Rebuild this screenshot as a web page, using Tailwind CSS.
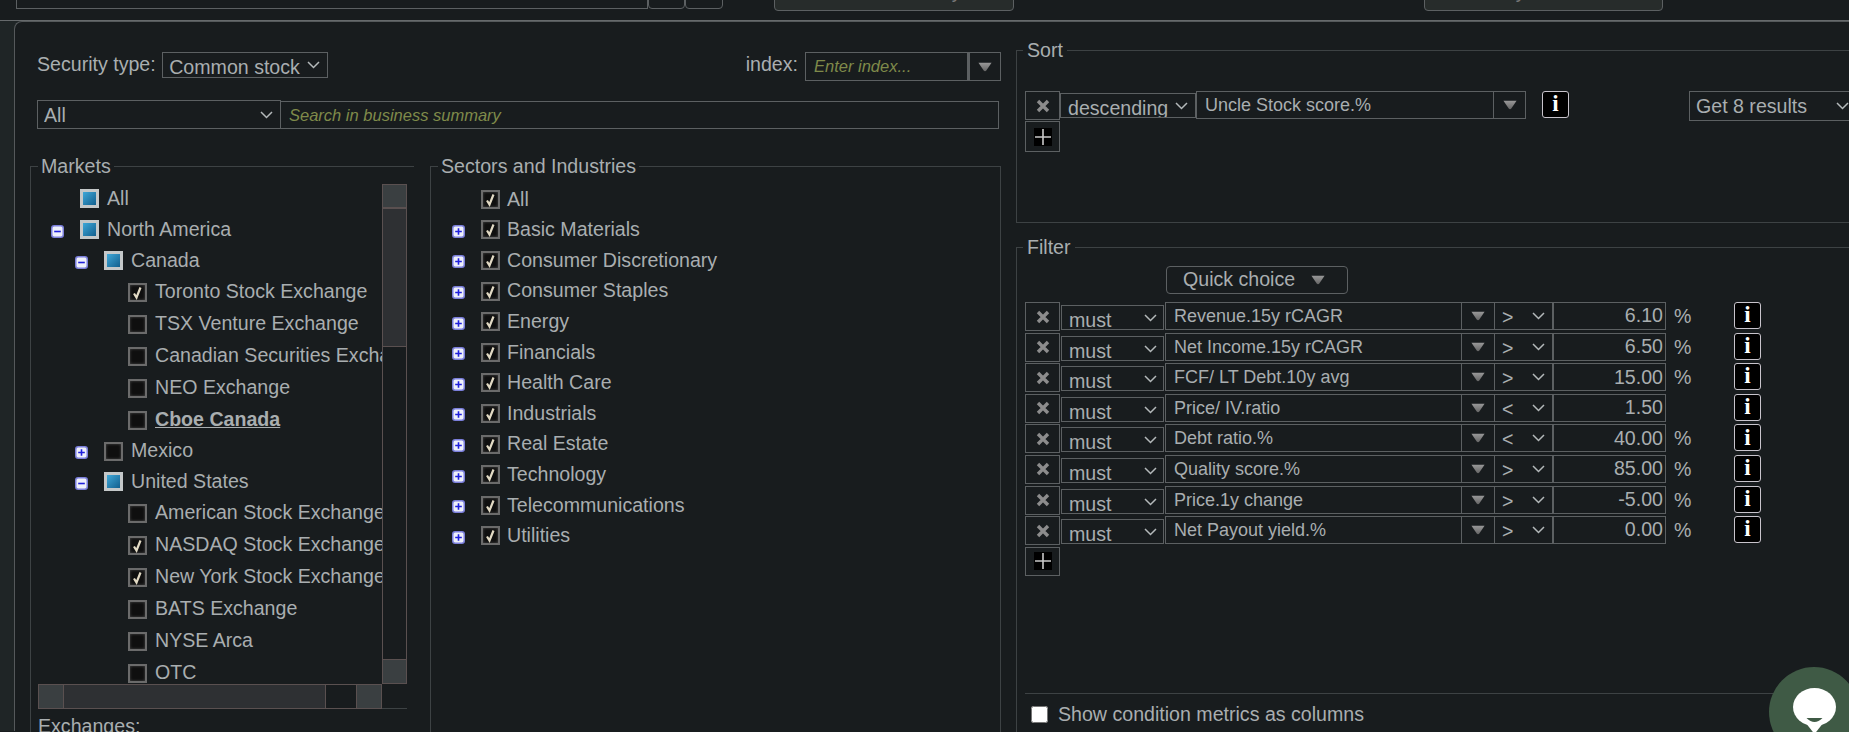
<!DOCTYPE html>
<html lang="en">
  <head>
    <meta charset="UTF-8" />
    <meta name="viewport" content="width=device-width, initial-scale=1.0" />
    <title>Stock screener</title>
    <script src="https://cdn.jsdelivr.net/npm/@tailwindcss/browser@4"></script>
  </head>

  <body class="relative w-[1849px] h-[732px] overflow-hidden bg-[#181c1e] text-[#a9aeb0] text-[19.6px] font-['Liberation_Sans',Arial,sans-serif]">
    <svg class="absolute w-0 h-0">
      <defs>
        <linearGradient id="tri" x1="0" y1="0" x2="0" y2="1">
          <stop offset="0" stop-color="#999" />
          <stop offset="1" stop-color="#666" />
        </linearGradient>
      </defs>
      <symbol id="tick" viewBox="0 0 15 15">
        <path d="M4 8.5 L6.5 12.5 L10.5 2.5" fill="none" stroke="#e2dac4" stroke-width="2.2" />
      </symbol>
      <symbol id="drop" viewBox="0 0 16 11">
        <path d="M0.5 0.5 H15.5 L9.5 9.5 Q8 11 6.5 9.5 Z" fill="url(#tri)" />
      </symbol>
      <symbol id="cross" viewBox="0 0 14 14">
        <path d="M2 2 L12 12 M12 2 L2 12" fill="none" stroke="#8c8c8c" stroke-width="3.4" />
      </symbol>
      <symbol id="plus" viewBox="0 0 18 18">
        <rect width="18" height="18" fill="#000" />
        <path d="M9 1 V17 M1 9 H17" stroke="#c9c9c9" stroke-width="1.6" />
      </symbol>
      <symbol id="exp-plus" viewBox="0 0 13 13">
        <rect x="0.75" y="0.75" width="11.5" height="11.5" rx="2.5" fill="#eef0fb" stroke="#7b7fdc" stroke-width="1.5" />
        <path d="M3.2 6.5 H9.8 M6.5 3.2 V9.8" stroke="#1f1fdd" stroke-width="1.6" />
      </symbol>
      <symbol id="exp-minus" viewBox="0 0 13 13">
        <rect x="0.75" y="0.75" width="11.5" height="11.5" rx="2.5" fill="#eef0fb" stroke="#7b7fdc" stroke-width="1.5" />
        <path d="M3.2 6.5 H9.8" stroke="#1f1fdd" stroke-width="1.6" />
      </symbol>
      <symbol id="chev" viewBox="0 0 13 8">
        <path d="M1 1 L6.5 6.5 L12 1" fill="none" stroke="#b4b9ba" stroke-width="1.5" />
      </symbol>
    </svg>

    <!-- top toolbar, mostly scrolled off -->
    <div class="flex items-start h-[20px] overflow-hidden">
      <input class="ml-[16px] -mt-[21px] w-[632px] h-[30px] shrink-0 border border-[#5c6062] pl-[8px] pb-[6px] text-[17px] italic placeholder:text-[#8b9a3f]" placeholder="Search by name or company" />
      <div class="-mt-[21px] w-[37px] h-[30px] shrink-0 border border-[#5c6062] rounded-b-[4px]"></div>
      <div class="-mt-[21px] w-[38px] h-[30px] shrink-0 border border-[#5c6062] rounded-b-[4px]"></div>
      <div class="ml-[51px] -mt-[19px] w-[240px] h-[30px] shrink-0 flex items-center justify-center pb-[8px] border border-[#5c6062] rounded-[4px] bg-[#272c2b] text-[#777]">Show summary</div>
      <div class="ml-[410px] -mt-[19px] w-[239px] h-[30px] shrink-0 flex items-center justify-center pb-[8px] border border-[#5c6062] rounded-[4px] bg-[#272c2b] text-[#777]">By sector</div>
    </div>
    <div class="h-[2px] bg-[#666a6c]"></div>

    <div class="bg-[#1f2526] pl-[14px] h-[710px]">
      <div class="flex h-full -mt-px border-l border-t border-[#55595b] rounded-tl-lg bg-[#181c1e]">
        <!-- left column -->
        <div class="w-[1001px] shrink-0">
          <div class="flex items-start justify-between ml-[22px] mr-[15px] mt-[30px] h-[29px]">
            <div class="flex items-center gap-[6.5px] h-[26px]">
              <span>Security type:</span>
              <div class="relative w-[166px] h-[26px]">
                <select class="appearance-none w-full h-full border border-[#5c6062] pl-[6px]"><option>Common stock</option></select>
                <svg class="absolute right-[8px] top-[9px] w-[13px] h-[8px] pointer-events-none"><use href="#chev" /></svg>
              </div>
            </div>
            <div class="flex items-center h-[29px]">
              <span class="mr-[7px] -mt-[3px]">index:</span>
              <input class="w-[163px] h-[29px] border border-[#5c6062] pl-[8px] text-[16.5px] italic placeholder:text-[#7f8a4a]" placeholder="Enter index..." />
              <div class="w-[33px] h-[29px] flex items-center justify-center border border-l-2 border-[#5c6062]">
                <svg class="w-[14px] h-[10px]"><use href="#drop" /></svg>
              </div>
            </div>
          </div>

          <div class="flex items-center ml-[22px] mt-[19px]">
            <div class="relative w-[244px] h-[29px]">
              <select class="appearance-none w-full h-full border border-[#5c6062] pl-[6px]"><option>All</option></select>
              <svg class="absolute right-[8px] top-[11px] w-[13px] h-[8px] pointer-events-none"><use href="#chev" /></svg>
            </div>
            <input class="w-[718px] h-[28px] border border-l-0 border-[#5c6062] pl-[8px] pt-[2px] text-[16.5px] italic placeholder:text-[#7f8a4a]" placeholder="Search in business summary" />
          </div>

          <div class="flex items-start gap-[16px] ml-[15px] mt-[25px]">
            <fieldset class="w-[384px] h-[600px] shrink-0 border-l border-t border-[#3d4244]">
              <legend class="ml-[7px] px-[3px] leading-[24px]">Markets</legend>
              <div class="ml-[7px] mt-[6px] w-[369px] grid grid-cols-[344px_25px] grid-rows-[500px_25px]">
                <div class="overflow-hidden whitespace-nowrap">
                  <div class="-mt-[1px]">
                    <div class="flex items-center h-[31px] pl-[42px] gap-[8px]"><i class="block shrink-0 w-[19px] h-[19px] border-[3px] border-[#c4c8c9] bg-linear-to-br from-[#3fa8d8] to-[#12608f]"></i>All</div>
                    <div class="flex items-center h-[31px] pl-[13px]"><svg class="w-[13px] h-[13px] mr-[16px] mt-[3px]"><use href="#exp-minus" /></svg><i class="block shrink-0 w-[19px] h-[19px] mr-[8px] border-[3px] border-[#c4c8c9] bg-linear-to-br from-[#3fa8d8] to-[#12608f]"></i>North America</div>
                    <div class="flex items-center h-[31px] pl-[37px]"><svg class="w-[13px] h-[13px] mr-[16px] mt-[3px]"><use href="#exp-minus" /></svg><i class="block shrink-0 w-[19px] h-[19px] mr-[8px] border-[3px] border-[#c4c8c9] bg-linear-to-br from-[#3fa8d8] to-[#12608f]"></i>Canada</div>
                    <div class="flex items-center h-[32px] pl-[90px] gap-[8px]"><i class="block shrink-0 w-[19px] h-[19px] border-2 border-[#6b6b6b] bg-[#0f0f0f] shadow-[inset_0_0_3px_#4a4a4a]"><svg class="w-[15px] h-[15px]"><use href="#tick" /></svg></i>Toronto Stock Exchange</div>
                    <div class="flex items-center h-[32px] pl-[90px] gap-[8px]"><i class="block shrink-0 w-[19px] h-[19px] border-2 border-[#6b6b6b] bg-[#0f0f0f] shadow-[inset_0_0_3px_#4a4a4a]"></i>TSX Venture Exchange</div>
                    <div class="flex items-center h-[32px] pl-[90px] gap-[8px]"><i class="block shrink-0 w-[19px] h-[19px] border-2 border-[#6b6b6b] bg-[#0f0f0f] shadow-[inset_0_0_3px_#4a4a4a]"></i>Canadian Securities Exchange</div>
                    <div class="flex items-center h-[32px] pl-[90px] gap-[8px]"><i class="block shrink-0 w-[19px] h-[19px] border-2 border-[#6b6b6b] bg-[#0f0f0f] shadow-[inset_0_0_3px_#4a4a4a]"></i>NEO Exchange</div>
                    <div class="flex items-center h-[32px] pl-[90px] gap-[8px]"><i class="block shrink-0 w-[19px] h-[19px] border-2 border-[#6b6b6b] bg-[#0f0f0f] shadow-[inset_0_0_3px_#4a4a4a]"></i><b class="underline">Cboe Canada</b></div>
                    <div class="flex items-center h-[30px] pl-[37px]"><svg class="w-[13px] h-[13px] mr-[16px] mt-[3px]"><use href="#exp-plus" /></svg><i class="block shrink-0 w-[19px] h-[19px] mr-[8px] border-2 border-[#6b6b6b] bg-[#0f0f0f] shadow-[inset_0_0_3px_#4a4a4a]"></i>Mexico</div>
                    <div class="flex items-center h-[31px] pl-[37px]"><svg class="w-[13px] h-[13px] mr-[16px] mt-[3px]"><use href="#exp-minus" /></svg><i class="block shrink-0 w-[19px] h-[19px] mr-[8px] border-[3px] border-[#c4c8c9] bg-linear-to-br from-[#3fa8d8] to-[#12608f]"></i>United States</div>
                    <div class="flex items-center h-[32px] pl-[90px] gap-[8px]"><i class="block shrink-0 w-[19px] h-[19px] border-2 border-[#6b6b6b] bg-[#0f0f0f] shadow-[inset_0_0_3px_#4a4a4a]"></i>American Stock Exchange</div>
                    <div class="flex items-center h-[32px] pl-[90px] gap-[8px]"><i class="block shrink-0 w-[19px] h-[19px] border-2 border-[#6b6b6b] bg-[#0f0f0f] shadow-[inset_0_0_3px_#4a4a4a]"><svg class="w-[15px] h-[15px]"><use href="#tick" /></svg></i>NASDAQ Stock Exchange</div>
                    <div class="flex items-center h-[32px] pl-[90px] gap-[8px]"><i class="block shrink-0 w-[19px] h-[19px] border-2 border-[#6b6b6b] bg-[#0f0f0f] shadow-[inset_0_0_3px_#4a4a4a]"><svg class="w-[15px] h-[15px]"><use href="#tick" /></svg></i>New York Stock Exchange</div>
                    <div class="flex items-center h-[32px] pl-[90px] gap-[8px]"><i class="block shrink-0 w-[19px] h-[19px] border-2 border-[#6b6b6b] bg-[#0f0f0f] shadow-[inset_0_0_3px_#4a4a4a]"></i>BATS Exchange</div>
                    <div class="flex items-center h-[32px] pl-[90px] gap-[8px]"><i class="block shrink-0 w-[19px] h-[19px] border-2 border-[#6b6b6b] bg-[#0f0f0f] shadow-[inset_0_0_3px_#4a4a4a]"></i>NYSE Arca</div>
                    <div class="flex items-center h-[32px] pl-[90px] gap-[8px]"><i class="block shrink-0 w-[19px] h-[19px] border-2 border-[#6b6b6b] bg-[#0f0f0f] shadow-[inset_0_0_3px_#4a4a4a]"></i>OTC</div>
                  </div>
                </div>
                <!-- vertical scrollbar -->
                <div class="flex flex-col border border-[#5a5050]">
                  <div class="h-[24px] bg-[#3a3f41] border-b-2 border-[#5a5050]"></div>
                  <div class="h-[138px] bg-[#2e3033] border-b border-[#5a5050]"></div>
                  <div class="flex-1"></div>
                  <div class="h-[24px] bg-[#3a3f41] border-t border-[#5a5050]"></div>
                </div>
                <!-- horizontal scrollbar -->
                <div class="flex border border-[#5a5050]">
                  <div class="w-[25px] bg-[#3a3f41] border-r border-[#5a5050]"></div>
                  <div class="w-[262px] bg-[#2e3033] border-r border-[#5a5050]"></div>
                  <div class="flex-1 border-r border-[#5a5050]"></div>
                  <div class="w-[24px] bg-[#3a3f41]"></div>
                </div>
                <div class="border-b border-[#3d4244]"></div>
              </div>
              <div class="ml-[7px] mt-[3px]">Exchanges:</div>
            </fieldset>

            <fieldset class="w-[571px] h-[600px] shrink-0 border border-[#3d4244]">
              <legend class="ml-[7px] px-[3px] leading-[24px]">Sectors and Industries</legend>
              <div class="mt-[6px] pl-[21px] whitespace-nowrap">
                <div class="flex items-center h-[30.6px] pl-[29px] gap-[7px]"><i class="block shrink-0 w-[19px] h-[19px] border-2 border-[#6b6b6b] bg-[#0f0f0f] shadow-[inset_0_0_3px_#4a4a4a]"><svg class="w-[15px] h-[15px]"><use href="#tick" /></svg></i>All</div>
                <div class="flex items-center h-[30.6px]"><svg class="w-[13px] h-[13px] mr-[16px] mt-[3px]"><use href="#exp-plus" /></svg><i class="block shrink-0 w-[19px] h-[19px] mr-[7px] border-2 border-[#6b6b6b] bg-[#0f0f0f] shadow-[inset_0_0_3px_#4a4a4a]"><svg class="w-[15px] h-[15px]"><use href="#tick" /></svg></i>Basic Materials</div>
                <div class="flex items-center h-[30.6px]"><svg class="w-[13px] h-[13px] mr-[16px] mt-[3px]"><use href="#exp-plus" /></svg><i class="block shrink-0 w-[19px] h-[19px] mr-[7px] border-2 border-[#6b6b6b] bg-[#0f0f0f] shadow-[inset_0_0_3px_#4a4a4a]"><svg class="w-[15px] h-[15px]"><use href="#tick" /></svg></i>Consumer Discretionary</div>
                <div class="flex items-center h-[30.6px]"><svg class="w-[13px] h-[13px] mr-[16px] mt-[3px]"><use href="#exp-plus" /></svg><i class="block shrink-0 w-[19px] h-[19px] mr-[7px] border-2 border-[#6b6b6b] bg-[#0f0f0f] shadow-[inset_0_0_3px_#4a4a4a]"><svg class="w-[15px] h-[15px]"><use href="#tick" /></svg></i>Consumer Staples</div>
                <div class="flex items-center h-[30.6px]"><svg class="w-[13px] h-[13px] mr-[16px] mt-[3px]"><use href="#exp-plus" /></svg><i class="block shrink-0 w-[19px] h-[19px] mr-[7px] border-2 border-[#6b6b6b] bg-[#0f0f0f] shadow-[inset_0_0_3px_#4a4a4a]"><svg class="w-[15px] h-[15px]"><use href="#tick" /></svg></i>Energy</div>
                <div class="flex items-center h-[30.6px]"><svg class="w-[13px] h-[13px] mr-[16px] mt-[3px]"><use href="#exp-plus" /></svg><i class="block shrink-0 w-[19px] h-[19px] mr-[7px] border-2 border-[#6b6b6b] bg-[#0f0f0f] shadow-[inset_0_0_3px_#4a4a4a]"><svg class="w-[15px] h-[15px]"><use href="#tick" /></svg></i>Financials</div>
                <div class="flex items-center h-[30.6px]"><svg class="w-[13px] h-[13px] mr-[16px] mt-[3px]"><use href="#exp-plus" /></svg><i class="block shrink-0 w-[19px] h-[19px] mr-[7px] border-2 border-[#6b6b6b] bg-[#0f0f0f] shadow-[inset_0_0_3px_#4a4a4a]"><svg class="w-[15px] h-[15px]"><use href="#tick" /></svg></i>Health Care</div>
                <div class="flex items-center h-[30.6px]"><svg class="w-[13px] h-[13px] mr-[16px] mt-[3px]"><use href="#exp-plus" /></svg><i class="block shrink-0 w-[19px] h-[19px] mr-[7px] border-2 border-[#6b6b6b] bg-[#0f0f0f] shadow-[inset_0_0_3px_#4a4a4a]"><svg class="w-[15px] h-[15px]"><use href="#tick" /></svg></i>Industrials</div>
                <div class="flex items-center h-[30.6px]"><svg class="w-[13px] h-[13px] mr-[16px] mt-[3px]"><use href="#exp-plus" /></svg><i class="block shrink-0 w-[19px] h-[19px] mr-[7px] border-2 border-[#6b6b6b] bg-[#0f0f0f] shadow-[inset_0_0_3px_#4a4a4a]"><svg class="w-[15px] h-[15px]"><use href="#tick" /></svg></i>Real Estate</div>
                <div class="flex items-center h-[30.6px]"><svg class="w-[13px] h-[13px] mr-[16px] mt-[3px]"><use href="#exp-plus" /></svg><i class="block shrink-0 w-[19px] h-[19px] mr-[7px] border-2 border-[#6b6b6b] bg-[#0f0f0f] shadow-[inset_0_0_3px_#4a4a4a]"><svg class="w-[15px] h-[15px]"><use href="#tick" /></svg></i>Technology</div>
                <div class="flex items-center h-[30.6px]"><svg class="w-[13px] h-[13px] mr-[16px] mt-[3px]"><use href="#exp-plus" /></svg><i class="block shrink-0 w-[19px] h-[19px] mr-[7px] border-2 border-[#6b6b6b] bg-[#0f0f0f] shadow-[inset_0_0_3px_#4a4a4a]"><svg class="w-[15px] h-[15px]"><use href="#tick" /></svg></i>Telecommunications</div>
                <div class="flex items-center h-[30.6px]"><svg class="w-[13px] h-[13px] mr-[16px] mt-[3px]"><use href="#exp-plus" /></svg><i class="block shrink-0 w-[19px] h-[19px] mr-[7px] border-2 border-[#6b6b6b] bg-[#0f0f0f] shadow-[inset_0_0_3px_#4a4a4a]"><svg class="w-[15px] h-[15px]"><use href="#tick" /></svg></i>Utilities</div>
              </div>
            </fieldset>
          </div>
        </div>

        <!-- right column -->
        <div class="w-[900px] shrink-0 pt-[16px]">
          <fieldset class="h-[185px] border border-[#3d4244]">
            <legend class="ml-[6px] px-[4px] leading-[24px]">Sort</legend>
            <div class="ml-[8px] mt-[29px]">
              <div class="flex items-start">
                <div class="w-[35px] h-[29px] flex items-center justify-center border border-[#5c6062]"><svg class="w-[14px] h-[14px]"><use href="#cross" /></svg></div>
                <div class="relative w-[136px] h-[25px] mt-[2px]">
                  <select class="appearance-none w-full h-full border border-[#5c6062] pl-[7px]"><option>descending</option></select>
                  <svg class="absolute right-[8px] top-[9px] w-[13px] h-[8px] pointer-events-none"><use href="#chev" /></svg>
                </div>
                <div class="w-[298px] h-[28px] flex items-center border border-[#5c6062] pl-[8px] pt-[1px] text-[18px]">Uncle Stock score.%</div>
                <div class="w-[32px] h-[28px] flex items-center justify-center border border-l-0 border-[#5c6062]"><svg class="w-[14px] h-[10px]"><use href="#drop" /></svg></div>
                <div class="ml-[16px] w-[27px] h-[27px] flex items-center justify-center bg-black border-[1.5px] border-[#c8c4cc] rounded-[3px] text-white font-bold text-[23px] font-['Liberation_Serif',serif]">i</div>
                <div class="relative ml-[120px] w-[172px] h-[30px]">
                  <select class="appearance-none w-full h-full border border-[#5c6062] pl-[6px]"><option>Get 8 results</option></select>
                  <svg class="absolute right-[12px] top-[11px] w-[13px] h-[8px] pointer-events-none"><use href="#chev" /></svg>
                </div>
              </div>
              <div class="w-[35px] h-[31px] flex items-center justify-center border border-[#5c6062]"><svg class="w-[18px] h-[18px]"><use href="#plus" /></svg></div>
            </div>
          </fieldset>

          <fieldset class="mt-[12px] h-[600px] border border-[#3d4244]">
            <legend class="ml-[6px] px-[4px] leading-[24px]">Filter</legend>
            <div class="ml-[149px] mt-[7px] w-[182px] h-[28px] flex items-center gap-[16px] pl-[16px] border border-[#5c6062] rounded-[4px]">Quick choice<svg class="w-[14px] h-[10px]"><use href="#drop" /></svg></div>
            <div class="ml-[8px] mt-[8px]">
              <div class="flex items-start h-[30.6px]">
                <div class="w-[35px] h-[29px] mr-px flex items-center justify-center border border-[#5c6062]"><svg class="w-[14px] h-[14px]"><use href="#cross" /></svg></div>
                <div class="relative w-[103px] h-[25px] mt-[3px] mr-px">
                  <select class="appearance-none w-full h-full border border-[#5c6062] pl-[7px]"><option>must</option></select>
                  <svg class="absolute right-[7px] top-[9px] w-[13px] h-[8px] pointer-events-none"><use href="#chev" /></svg>
                </div>
                <div class="w-[297px] h-[28px] flex items-center border border-[#5c6062] pl-[8px] pt-[1px] text-[18px]">Revenue.15y rCAGR</div>
                <div class="w-[33px] h-[28px] flex items-center justify-center border border-l-0 border-[#5c6062]"><svg class="w-[14px] h-[10px]"><use href="#drop" /></svg></div>
                <div class="relative w-[58px] h-[28px]">
                  <select class="appearance-none w-full h-full border border-l-0 border-[#5c6062] pl-[7px]"><option>&gt;</option></select>
                  <svg class="absolute right-[8px] top-[10px] w-[13px] h-[8px] pointer-events-none"><use href="#chev" /></svg>
                </div>
                <div class="w-[113px] h-[28px] flex items-center justify-end border border-[#5c6062] pr-[2px]">6.10</div>
                <div class="w-[68px] pl-[8px] leading-[28px]">%</div>
                <div class="w-[27px] h-[27px] flex items-center justify-center bg-black border-[1.5px] border-[#c8c4cc] rounded-[3px] text-white font-bold text-[23px] font-['Liberation_Serif',serif]">i</div>
              </div>
              <div class="flex items-start h-[30.6px]">
                <div class="w-[35px] h-[29px] mr-px flex items-center justify-center border border-[#5c6062]"><svg class="w-[14px] h-[14px]"><use href="#cross" /></svg></div>
                <div class="relative w-[103px] h-[25px] mt-[3px] mr-px">
                  <select class="appearance-none w-full h-full border border-[#5c6062] pl-[7px]"><option>must</option></select>
                  <svg class="absolute right-[7px] top-[9px] w-[13px] h-[8px] pointer-events-none"><use href="#chev" /></svg>
                </div>
                <div class="w-[297px] h-[28px] flex items-center border border-[#5c6062] pl-[8px] pt-[1px] text-[18px]">Net Income.15y rCAGR</div>
                <div class="w-[33px] h-[28px] flex items-center justify-center border border-l-0 border-[#5c6062]"><svg class="w-[14px] h-[10px]"><use href="#drop" /></svg></div>
                <div class="relative w-[58px] h-[28px]">
                  <select class="appearance-none w-full h-full border border-l-0 border-[#5c6062] pl-[7px]"><option>&gt;</option></select>
                  <svg class="absolute right-[8px] top-[10px] w-[13px] h-[8px] pointer-events-none"><use href="#chev" /></svg>
                </div>
                <div class="w-[113px] h-[28px] flex items-center justify-end border border-[#5c6062] pr-[2px]">6.50</div>
                <div class="w-[68px] pl-[8px] leading-[28px]">%</div>
                <div class="w-[27px] h-[27px] flex items-center justify-center bg-black border-[1.5px] border-[#c8c4cc] rounded-[3px] text-white font-bold text-[23px] font-['Liberation_Serif',serif]">i</div>
              </div>
              <div class="flex items-start h-[30.6px]">
                <div class="w-[35px] h-[29px] mr-px flex items-center justify-center border border-[#5c6062]"><svg class="w-[14px] h-[14px]"><use href="#cross" /></svg></div>
                <div class="relative w-[103px] h-[25px] mt-[3px] mr-px">
                  <select class="appearance-none w-full h-full border border-[#5c6062] pl-[7px]"><option>must</option></select>
                  <svg class="absolute right-[7px] top-[9px] w-[13px] h-[8px] pointer-events-none"><use href="#chev" /></svg>
                </div>
                <div class="w-[297px] h-[28px] flex items-center border border-[#5c6062] pl-[8px] pt-[1px] text-[18px]">FCF/ LT Debt.10y avg</div>
                <div class="w-[33px] h-[28px] flex items-center justify-center border border-l-0 border-[#5c6062]"><svg class="w-[14px] h-[10px]"><use href="#drop" /></svg></div>
                <div class="relative w-[58px] h-[28px]">
                  <select class="appearance-none w-full h-full border border-l-0 border-[#5c6062] pl-[7px]"><option>&gt;</option></select>
                  <svg class="absolute right-[8px] top-[10px] w-[13px] h-[8px] pointer-events-none"><use href="#chev" /></svg>
                </div>
                <div class="w-[113px] h-[28px] flex items-center justify-end border border-[#5c6062] pr-[2px]">15.00</div>
                <div class="w-[68px] pl-[8px] leading-[28px]">%</div>
                <div class="w-[27px] h-[27px] flex items-center justify-center bg-black border-[1.5px] border-[#c8c4cc] rounded-[3px] text-white font-bold text-[23px] font-['Liberation_Serif',serif]">i</div>
              </div>
              <div class="flex items-start h-[30.6px]">
                <div class="w-[35px] h-[29px] mr-px flex items-center justify-center border border-[#5c6062]"><svg class="w-[14px] h-[14px]"><use href="#cross" /></svg></div>
                <div class="relative w-[103px] h-[25px] mt-[3px] mr-px">
                  <select class="appearance-none w-full h-full border border-[#5c6062] pl-[7px]"><option>must</option></select>
                  <svg class="absolute right-[7px] top-[9px] w-[13px] h-[8px] pointer-events-none"><use href="#chev" /></svg>
                </div>
                <div class="w-[297px] h-[28px] flex items-center border border-[#5c6062] pl-[8px] pt-[1px] text-[18px]">Price/ IV.ratio</div>
                <div class="w-[33px] h-[28px] flex items-center justify-center border border-l-0 border-[#5c6062]"><svg class="w-[14px] h-[10px]"><use href="#drop" /></svg></div>
                <div class="relative w-[58px] h-[28px]">
                  <select class="appearance-none w-full h-full border border-l-0 border-[#5c6062] pl-[7px]"><option>&lt;</option></select>
                  <svg class="absolute right-[8px] top-[10px] w-[13px] h-[8px] pointer-events-none"><use href="#chev" /></svg>
                </div>
                <div class="w-[113px] h-[28px] flex items-center justify-end border border-[#5c6062] pr-[2px]">1.50</div>
                <div class="w-[68px] pl-[8px] leading-[28px]"></div>
                <div class="w-[27px] h-[27px] flex items-center justify-center bg-black border-[1.5px] border-[#c8c4cc] rounded-[3px] text-white font-bold text-[23px] font-['Liberation_Serif',serif]">i</div>
              </div>
              <div class="flex items-start h-[30.6px]">
                <div class="w-[35px] h-[29px] mr-px flex items-center justify-center border border-[#5c6062]"><svg class="w-[14px] h-[14px]"><use href="#cross" /></svg></div>
                <div class="relative w-[103px] h-[25px] mt-[3px] mr-px">
                  <select class="appearance-none w-full h-full border border-[#5c6062] pl-[7px]"><option>must</option></select>
                  <svg class="absolute right-[7px] top-[9px] w-[13px] h-[8px] pointer-events-none"><use href="#chev" /></svg>
                </div>
                <div class="w-[297px] h-[28px] flex items-center border border-[#5c6062] pl-[8px] pt-[1px] text-[18px]">Debt ratio.%</div>
                <div class="w-[33px] h-[28px] flex items-center justify-center border border-l-0 border-[#5c6062]"><svg class="w-[14px] h-[10px]"><use href="#drop" /></svg></div>
                <div class="relative w-[58px] h-[28px]">
                  <select class="appearance-none w-full h-full border border-l-0 border-[#5c6062] pl-[7px]"><option>&lt;</option></select>
                  <svg class="absolute right-[8px] top-[10px] w-[13px] h-[8px] pointer-events-none"><use href="#chev" /></svg>
                </div>
                <div class="w-[113px] h-[28px] flex items-center justify-end border border-[#5c6062] pr-[2px]">40.00</div>
                <div class="w-[68px] pl-[8px] leading-[28px]">%</div>
                <div class="w-[27px] h-[27px] flex items-center justify-center bg-black border-[1.5px] border-[#c8c4cc] rounded-[3px] text-white font-bold text-[23px] font-['Liberation_Serif',serif]">i</div>
              </div>
              <div class="flex items-start h-[30.6px]">
                <div class="w-[35px] h-[29px] mr-px flex items-center justify-center border border-[#5c6062]"><svg class="w-[14px] h-[14px]"><use href="#cross" /></svg></div>
                <div class="relative w-[103px] h-[25px] mt-[3px] mr-px">
                  <select class="appearance-none w-full h-full border border-[#5c6062] pl-[7px]"><option>must</option></select>
                  <svg class="absolute right-[7px] top-[9px] w-[13px] h-[8px] pointer-events-none"><use href="#chev" /></svg>
                </div>
                <div class="w-[297px] h-[28px] flex items-center border border-[#5c6062] pl-[8px] pt-[1px] text-[18px]">Quality score.%</div>
                <div class="w-[33px] h-[28px] flex items-center justify-center border border-l-0 border-[#5c6062]"><svg class="w-[14px] h-[10px]"><use href="#drop" /></svg></div>
                <div class="relative w-[58px] h-[28px]">
                  <select class="appearance-none w-full h-full border border-l-0 border-[#5c6062] pl-[7px]"><option>&gt;</option></select>
                  <svg class="absolute right-[8px] top-[10px] w-[13px] h-[8px] pointer-events-none"><use href="#chev" /></svg>
                </div>
                <div class="w-[113px] h-[28px] flex items-center justify-end border border-[#5c6062] pr-[2px]">85.00</div>
                <div class="w-[68px] pl-[8px] leading-[28px]">%</div>
                <div class="w-[27px] h-[27px] flex items-center justify-center bg-black border-[1.5px] border-[#c8c4cc] rounded-[3px] text-white font-bold text-[23px] font-['Liberation_Serif',serif]">i</div>
              </div>
              <div class="flex items-start h-[30.6px]">
                <div class="w-[35px] h-[29px] mr-px flex items-center justify-center border border-[#5c6062]"><svg class="w-[14px] h-[14px]"><use href="#cross" /></svg></div>
                <div class="relative w-[103px] h-[25px] mt-[3px] mr-px">
                  <select class="appearance-none w-full h-full border border-[#5c6062] pl-[7px]"><option>must</option></select>
                  <svg class="absolute right-[7px] top-[9px] w-[13px] h-[8px] pointer-events-none"><use href="#chev" /></svg>
                </div>
                <div class="w-[297px] h-[28px] flex items-center border border-[#5c6062] pl-[8px] pt-[1px] text-[18px]">Price.1y change</div>
                <div class="w-[33px] h-[28px] flex items-center justify-center border border-l-0 border-[#5c6062]"><svg class="w-[14px] h-[10px]"><use href="#drop" /></svg></div>
                <div class="relative w-[58px] h-[28px]">
                  <select class="appearance-none w-full h-full border border-l-0 border-[#5c6062] pl-[7px]"><option>&gt;</option></select>
                  <svg class="absolute right-[8px] top-[10px] w-[13px] h-[8px] pointer-events-none"><use href="#chev" /></svg>
                </div>
                <div class="w-[113px] h-[28px] flex items-center justify-end border border-[#5c6062] pr-[2px]">-5.00</div>
                <div class="w-[68px] pl-[8px] leading-[28px]">%</div>
                <div class="w-[27px] h-[27px] flex items-center justify-center bg-black border-[1.5px] border-[#c8c4cc] rounded-[3px] text-white font-bold text-[23px] font-['Liberation_Serif',serif]">i</div>
              </div>
              <div class="flex items-start h-[30.6px]">
                <div class="w-[35px] h-[29px] mr-px flex items-center justify-center border border-[#5c6062]"><svg class="w-[14px] h-[14px]"><use href="#cross" /></svg></div>
                <div class="relative w-[103px] h-[25px] mt-[3px] mr-px">
                  <select class="appearance-none w-full h-full border border-[#5c6062] pl-[7px]"><option>must</option></select>
                  <svg class="absolute right-[7px] top-[9px] w-[13px] h-[8px] pointer-events-none"><use href="#chev" /></svg>
                </div>
                <div class="w-[297px] h-[28px] flex items-center border border-[#5c6062] pl-[8px] pt-[1px] text-[18px]">Net Payout yield.%</div>
                <div class="w-[33px] h-[28px] flex items-center justify-center border border-l-0 border-[#5c6062]"><svg class="w-[14px] h-[10px]"><use href="#drop" /></svg></div>
                <div class="relative w-[58px] h-[28px]">
                  <select class="appearance-none w-full h-full border border-l-0 border-[#5c6062] pl-[7px]"><option>&gt;</option></select>
                  <svg class="absolute right-[8px] top-[10px] w-[13px] h-[8px] pointer-events-none"><use href="#chev" /></svg>
                </div>
                <div class="w-[113px] h-[28px] flex items-center justify-end border border-[#5c6062] pr-[2px]">0.00</div>
                <div class="w-[68px] pl-[8px] leading-[28px]">%</div>
                <div class="w-[27px] h-[27px] flex items-center justify-center bg-black border-[1.5px] border-[#c8c4cc] rounded-[3px] text-white font-bold text-[23px] font-['Liberation_Serif',serif]">i</div>
              </div>
              <div class="w-[35px] h-[29px] flex items-center justify-center border border-[#5c6062]"><svg class="w-[18px] h-[18px]"><use href="#plus" /></svg></div>
              <div class="mt-[117px] w-[760px] border-t border-[#3d4244]"></div>
              <label class="flex items-center mt-[6px] ml-[6px] gap-[10px]"><input type="checkbox" class="w-[17px] h-[17px]" />Show condition metrics as columns</label>
            </div>
          </fieldset>
        </div>
      </div>
    </div>

    <!-- chat widget -->
    <div class="absolute left-[1769px] top-[667px] w-[90px] h-[90px] rounded-full bg-[#3f5a45]">
      <svg class="absolute left-[24px] top-[21px]" width="44" height="46" viewBox="0 0 44 46">
        <ellipse cx="21.5" cy="19" rx="21.5" ry="19" fill="#fff" />
        <path d="M12 34 L21.5 46 L31 34 Z" fill="#fff" />
        <path d="M13.5 30 H29.5 Q21.5 38 13.5 30 Z" fill="#3f5a45" />
      </svg>
    </div>
  </body>
</html>
